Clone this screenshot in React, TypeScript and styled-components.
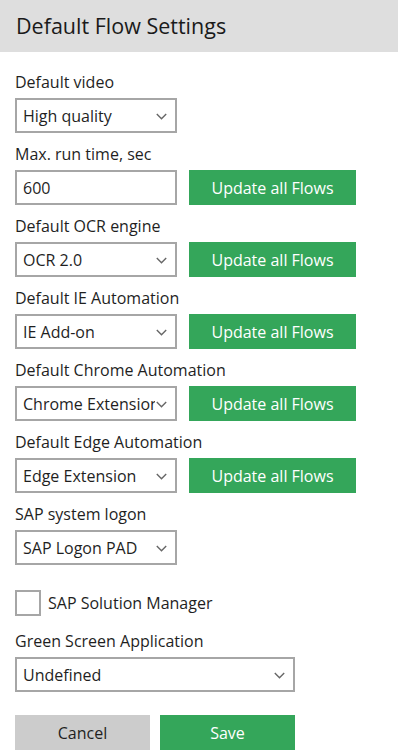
import React from "react";
import styled, { createGlobalStyle } from "styled-components";

const Global = createGlobalStyle`
  html, body { margin: 0; padding: 0; background: #ffffff; }
  body { font-family: "Open Sans", "Noto Sans", sans-serif; color: #1f1f1f; }
  * { box-sizing: border-box; }
`;

const Page = styled.div`
  width: 398px;
  height: 755px;
  background: #ffffff;
  overflow: hidden;
`;

const Header = styled.header`
  height: 52px;
  background: #dedede;
  display: flex;
  align-items: center;
  padding: 0 16px 2px;
  font-size: 21.5px;
  color: #1a1a1a;
`;

const Body = styled.div`
  display: flex;
  flex-direction: column;
  padding: 20px 15px 0;
`;

const Group = styled.div<{ $mt?: number }>`
  display: flex;
  flex-direction: column;
  gap: 6px;
  margin-top: ${(p) => p.$mt ?? 11}px;
  &:first-child { margin-top: 0; }
`;

const Label = styled.div`
  font-size: 16px;
  line-height: 20px;
  height: 20px;
  white-space: nowrap;
  color: #1f1f1f;
`;

const Row = styled.div`
  display: flex;
  gap: 12px;
  align-items: center;
`;

const Field = styled.div<{ $w?: number }>`
  width: ${(p) => p.$w ?? 162}px;
  height: 35px;
  border: 2px solid #a6a6a6;
  background: #fff;
  display: flex;
  align-items: center;
  padding: 1px 8px 0 6px;
  font-size: 16px;
  color: #1f1f1f;
  overflow: hidden;
`;

const FieldText = styled.span`
  flex: 1;
  white-space: nowrap;
  overflow: hidden;
`;

const Chevron = styled.svg`
  flex: none;
  width: 11px;
  height: 7px;
  margin-left: 1px;
`;

const Button = styled.button<{ $variant?: "green" | "gray"; $w?: number }>`
  width: ${(p) => p.$w ?? 167}px;
  height: 35px;
  border: none;
  padding: 0;
  font-family: inherit;
  font-size: 16px;
  color: ${(p) => (p.$variant === "gray" ? "#1f1f1f" : "#ffffff")};
  background: ${(p) => (p.$variant === "gray" ? "#cccccc" : "#34a65a")};
  cursor: pointer;
`;

const CheckRow = styled.label`
  display: flex;
  align-items: center;
  gap: 7px;
  margin-top: 25px;
  font-size: 16px;
`;

const Box = styled.span`
  width: 26px;
  height: 26px;
  border: 2px solid #a6a6a6;
  background: #fff;
`;

const Footer = styled.div`
  display: flex;
  gap: 10px;
  margin-top: 23px;
`;

const ChevronIcon = () => (
  <Chevron viewBox="0 0 11 7">
    <path d="M0.8 1 L5.5 5.7 L10.2 1" fill="none" stroke="#666" strokeWidth="1.4" />
  </Chevron>
);

const Select = ({ value, w }: { value: string; w?: number }) => (
  <Field $w={w}>
    <FieldText>{value}</FieldText>
    <ChevronIcon />
  </Field>
);

const rows: { label: string; value: string }[] = [
  { label: "Default OCR engine", value: "OCR 2.0" },
  { label: "Default IE Automation", value: "IE Add-on" },
  { label: "Default Chrome Automation", value: "Chrome Extension" },
  { label: "Default Edge Automation", value: "Edge Extension" },
];

export default function App() {
  return (
    <Page>
      <Global />
      <Header>Default Flow Settings</Header>
      <Body>
        <Group>
          <Label>Default video</Label>
          <Select value="High quality" />
        </Group>
        <Group>
          <Label>Max. run time, sec</Label>
          <Row>
            <Field>
              <FieldText>600</FieldText>
            </Field>
            <Button $variant="green">Update all Flows</Button>
          </Row>
        </Group>
        {rows.map((r) => (
          <Group key={r.label}>
            <Label>{r.label}</Label>
            <Row>
              <Select value={r.value} />
              <Button $variant="green">Update all Flows</Button>
            </Row>
          </Group>
        ))}
        <Group>
          <Label>SAP system logon</Label>
          <Select value="SAP Logon PAD" />
        </Group>
        <CheckRow>
          <Box />
          SAP Solution Manager
        </CheckRow>
        <Group $mt={15}>
          <Label>Green Screen Application</Label>
          <Select value="Undefined" w={280} />
        </Group>
        <Footer>
          <Button $variant="gray" $w={135}>Cancel</Button>
          <Button $variant="green" $w={135}>Save</Button>
        </Footer>
      </Body>
    </Page>
  );
}
